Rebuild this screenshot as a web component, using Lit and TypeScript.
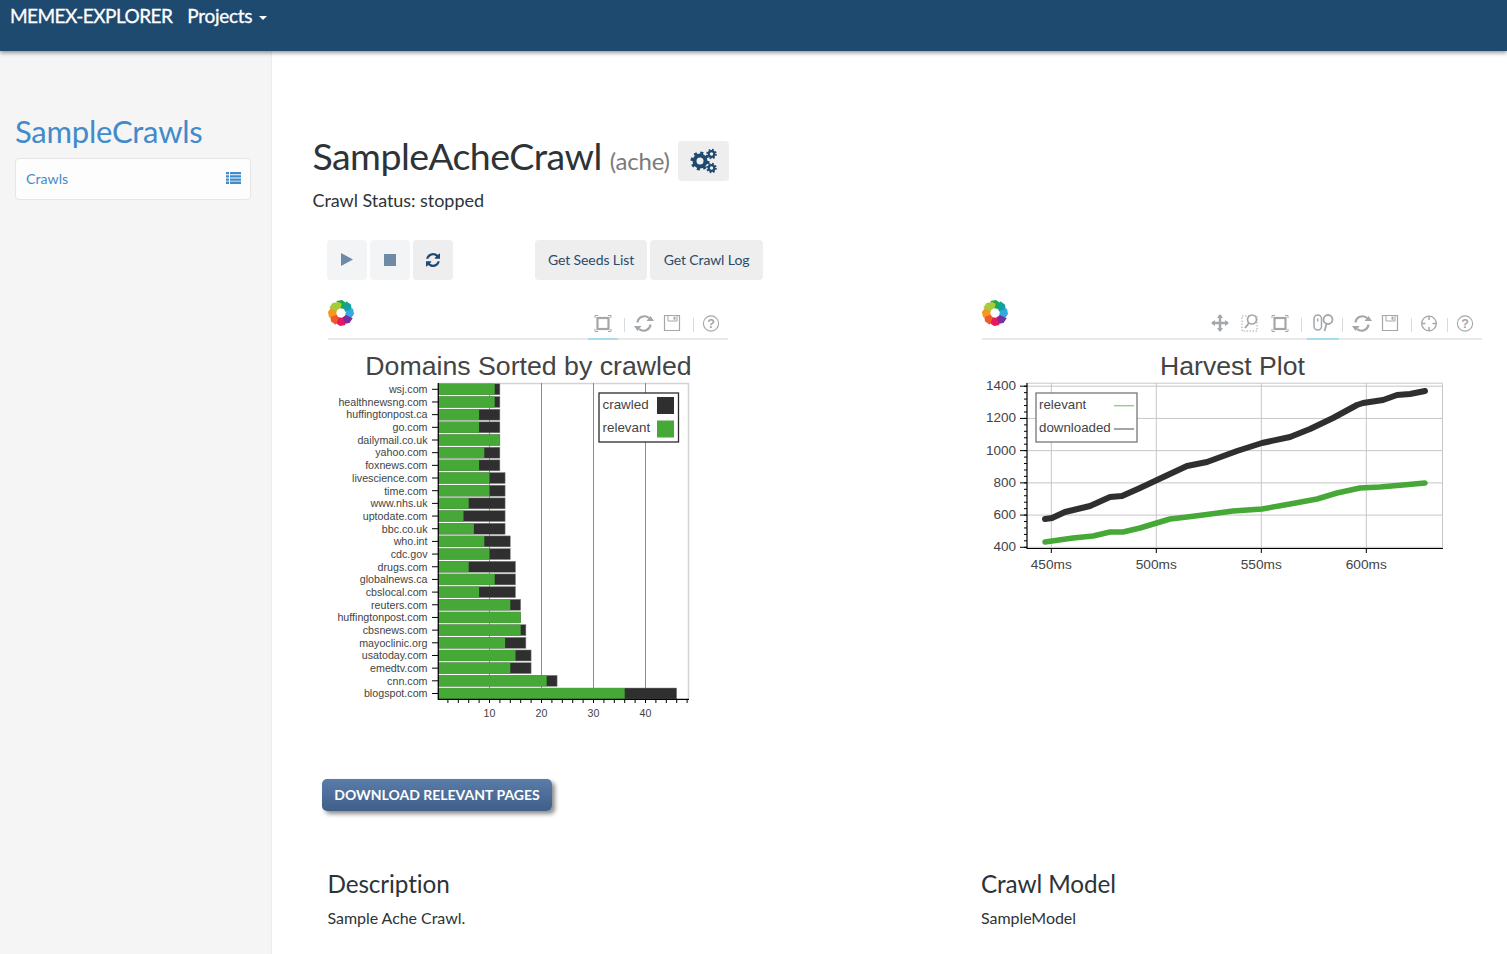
import { LitElement, css, html, svg } from "lit";
import { customElement, property } from "lit/decorators.js";

const DOMAINS: [string, number, number][] = [
  ["wsj.com", 11, 12], ["healthnewsng.com", 11, 12], ["huffingtonpost.ca", 8, 12], ["go.com", 8, 12],
  ["dailymail.co.uk", 12, 12], ["yahoo.com", 9, 12], ["foxnews.com", 8, 12], ["livescience.com", 10, 13],
  ["time.com", 10, 13], ["www.nhs.uk", 6, 13], ["uptodate.com", 5, 13], ["bbc.co.uk", 7, 13],
  ["who.int", 9, 14], ["cdc.gov", 10, 14], ["drugs.com", 6, 15], ["globalnews.ca", 11, 15],
  ["cbslocal.com", 8, 15], ["reuters.com", 14, 16], ["huffingtonpost.com", 16, 16], ["cbsnews.com", 16, 17],
  ["mayoclinic.org", 13, 17], ["usatoday.com", 15, 18], ["emedtv.com", 14, 18], ["cnn.com", 21, 23],
  ["blogspot.com", 36, 46],
];

const DOWNLOADED = "1045,519 1052,518 1065,512 1090,506 1110,497 1122,496 1140,488 1157,480 1187,466 1207,462 1237,451 1262,443 1290,437 1310,429 1333,418 1357,405 1363,403 1383,400 1397,395 1410,394 1425,391";
const RELEVANT = "1045,542 1073,538 1093,536 1110,532 1123,532 1140,528 1170,519 1187,517 1203,515 1233,511 1262,509 1290,504 1317,499 1337,493 1360,488 1380,487 1403,485 1425,483";

const PETALS = ["#1fa84f", "#0fa3a0", "#35a8e0", "#7b2d9b", "#e9175f", "#f0592a", "#f7981d", "#a5cd39"];

const logo = html`<svg class="logo" width="26" height="26" viewBox="-13 -13 26 26">
  ${PETALS.map((c, i) => svg`<polygon transform="rotate(${i * 45})" fill=${c} points="-4.500,-12 1,-13 6,-9.500 7,-6 3.500,-4 -2,-5"></polygon>`)}
</svg>`;

const icons: Record<string, unknown> = {
  pan: svg`<path d="M10 2v16M2 10h16" stroke-width="2.4"/><path d="M7 5l3-4 3 4zM7 15l3 4 3-4zM5 7l-4 3 4 3zM15 7l4 3-4 3z" fill="#a3a7aa" stroke="none"/>`,
  zoomsel: svg`<rect x="2" y="3" width="15" height="15" stroke-dasharray="1.5 1.5" stroke-width="1"/><circle cx="12" cy="6.500" r="4.500" fill="#fff" stroke-width="1.700"/><path d="M9 10l-4 5" stroke-width="2"/>`,
  box: svg`<rect x="4.500" y="5" width="11" height="11" stroke-width="2.200"/><path d="M2 5V2.500H5M15 2.500h3V5M18 16v2.500h-3M5 18.500H2V16" stroke-width="1"/>`,
  wheel: svg`<rect x="2" y="2" width="7.500" height="15" rx="3.700" stroke-width="1.500"/><path d="M5.700 5.500v3" stroke-width="1.500"/><circle cx="16" cy="6.500" r="4.500" stroke-width="1.800"/><path d="M14.500 11l-2 7" stroke-width="1.800"/>`,
  reset: svg`<path d="M3.500 9.500a7 7 0 0 1 11.500-4.500M16.500 11.500a7 7 0 0 1-11.500 4.500" stroke-width="2.200"/><path d="M12.500 8h7.500l-3.500-5zM7.500 13H0l3.500 5z" fill="#a3a7aa" stroke="none"/>`,
  save: svg`<path d="M2.500 2.500h15v15h-15z" stroke-width="1.200"/><path d="M6 2.500v5.500h9V2.500" stroke-width="1"/><rect x="11.500" y="3.700" width="2" height="3" fill="#a3a7aa" stroke="none"/>`,
  cross: svg`<circle cx="10" cy="10.500" r="7.300" stroke-width="1.300"/><path d="M10 3v4M10 14v4M2.500 10.500h4M13.500 10.500h4" stroke-width="1.500"/>`,
  help: svg`<circle cx="10" cy="10.500" r="7.600" stroke-width="1.100"/><text x="10" y="15" text-anchor="middle" font-size="12.500" font-weight="700" fill="#a3a7aa" stroke="none" font-family="Liberation Sans, sans-serif">?</text>`,
};

@customElement("plot-toolbar")
export class PlotToolbar extends LitElement {
  // "|" is a separator, a leading * marks the tool as active
  @property({ type: Array }) tools: string[] = [];

  static styles = css`
    :host { display: block; }
    .bar {
      display: flex;
      align-items: flex-start;
      justify-content: space-between;
      height: 38px;
      border-bottom: 2px solid #e9e9e9;
      box-sizing: content-box;
    }
    .tools {
      display: flex;
      align-items: center;
      height: 21px;
      margin-top: 13px;
      padding-right: 5.5px;
    }
    .tool {
      position: relative;
      width: 20px;
      height: 21px;
      margin: 0 5px;
    }
    .tool svg { display: block; fill: none; stroke: #a3a7aa; }
    .tool.reset { margin: 0 4px 0 3px; }
    .tool.save { margin: 0 5px 0 4px; }
    .tool.cross, .tool.help { margin: 0 1.5px; }
    .tool.wheel { width: 22px; margin: 0 1.5px 0 4px; }
    .tool.active::after {
      content: "";
      position: absolute;
      left: -5px;
      right: -5px;
      top: 25px;
      height: 2px;
      background: #a9dcef;
    }
    .sep { width: 1px; height: 14px; margin: 2px 6px 0; background: #d5dbe0; }
    .logo { display: block; }
  `;

  render() {
    return html`<div class="bar">
      ${logo}
      <div class="tools">
        ${this.tools.map((t) => {
          if (t === "|") return html`<span class="sep"></span>`;
          const active = t.startsWith("*");
          const name = active ? t.slice(1) : t;
          return html`<span class="tool ${name} ${active ? "active" : ""}">
            <svg width=${name === "wheel" ? 22 : 20} height="21" viewBox="0 0 ${name === "wheel" ? 22 : 20} 21">${icons[name]}</svg>
          </span>`;
        })}
      </div>
    </div>`;
  }
}

@customElement("domains-plot")
export class DomainsPlot extends LitElement {
  static styles = css`
    :host { display: block; }
    svg { display: block; font-family: "Liberation Sans", Arial, sans-serif; }
  `;

  render() {
    const sx = (v: number) => 437.5 + 5.2 * v;
    const ry = (i: number) => 389.3 + (304.2 / 24) * i;
    const minor = Array.from({ length: 24 }, (_, i) => (i + 1) * 2);
    return html`<svg width="400" height="400" viewBox="328 340 400 400">
      <text x="528.500" y="375" text-anchor="middle" font-size="26.700" fill="#444">Domains Sorted by crawled</text>
      <path d="M438 383.500H688.500V699" fill="none" stroke="#d4d4d4" stroke-width="1.500"/>
      ${[10, 20, 30, 40].map((v) => svg`<line x1=${sx(v)} x2=${sx(v)} y1="383" y2="699" stroke="#868c94" stroke-width="1"/>`)}
      ${DOMAINS.map(([name, rel, crawled], i) => svg`
        <rect x="438" y=${ry(i) - 5.5} width=${sx(crawled) - 438} height="11" fill="#2f2f2f" stroke="#8a8a8a" stroke-width=".5"/>
        <rect x="438" y=${ry(i) - 5.5} width=${sx(rel) - 438} height="11" fill="#46a836"/>
        <line x1="432" x2="438" y1=${ry(i)} y2=${ry(i)} stroke="#000" stroke-width="1"/>
        <text x="427.500" y=${ry(i) + 3.800} text-anchor="end" font-size="10.700" fill="#444">${name}</text>
      `)}
      <path d="M438.300 383V699.300H689" fill="none" stroke="#000" stroke-width="1.200"/>
      ${minor.map((v) => svg`<line x1=${sx(v)} x2=${sx(v)} y1="699" y2="703" stroke="#000" stroke-width="1"/>`)}
      ${[10, 20, 30, 40].map((v) => svg`<text x=${sx(v)} y="717" text-anchor="middle" font-size="10.600" fill="#444">${v}</text>`)}
      <rect x="599" y="393" width="79.500" height="49" fill="#fff" stroke="#2b2b2b" stroke-width="1.300"/>
      <text x="602.500" y="409" font-size="13.400" fill="#444">crawled</text>
      <text x="602.500" y="432" font-size="13.400" fill="#444">relevant</text>
      <rect x="657" y="397" width="17" height="17" fill="#2f2f2f"/>
      <rect x="657" y="420.500" width="17" height="17" fill="#46a836"/>
    </svg>`;
  }
}

@customElement("harvest-plot")
export class HarvestPlot extends LitElement {
  static styles = css`
    :host { display: block; }
    svg { display: block; font-family: "Liberation Sans", Arial, sans-serif; }
  `;

  render() {
    const sx = (ms: number) => 1051.3 + 2.1 * (ms - 450);
    const sy = (v: number) => 547.3 - 0.1611 * (v - 400);
    const xs = [450, 500, 550, 600];
    const ys = [400, 600, 800, 1000, 1200, 1400];
    const minor = Array.from({ length: 26 }, (_, i) => 400 + i * 40);
    return html`<svg width="500" height="240" viewBox="982 340 500 240">
      <text x="1232.500" y="375" text-anchor="middle" font-size="26.600" fill="#444">Harvest Plot</text>
      <path d="M1027 383.200H1442.500V548" fill="none" stroke="#c8c8c8" stroke-width="1"/>
      ${xs.map((v) => svg`<line x1=${sx(v)} x2=${sx(v)} y1="383" y2="548" stroke="#c6c6c6"/>`)}
      ${ys.map((v) => svg`<line x1="1027" x2="1442" y1=${sy(v)} y2=${sy(v)} stroke="#c6c6c6"/>`)}
      <polyline points=${RELEVANT} fill="none" stroke="#46a836" stroke-width="5.500" stroke-linecap="round" stroke-linejoin="round"/>
      <polyline points=${DOWNLOADED} fill="none" stroke="#2f2f2f" stroke-width="6" stroke-linecap="round" stroke-linejoin="round"/>
      <path d="M1027 383V548.500H1443" fill="none" stroke="#000" stroke-width="1.200"/>
      ${minor.map((v) => svg`<line x1="1024" x2="1027" y1=${sy(v)} y2=${sy(v)} stroke="#000"/>`)}
      ${ys.map((v) => svg`
        <line x1="1020" x2="1027" y1=${sy(v)} y2=${sy(v)} stroke="#000"/>
        <text x="1016" y=${sy(v) + 4} text-anchor="end" font-size="13.500" fill="#444">${v}</text>
      `)}
      ${xs.map((v) => svg`
        <line x1=${sx(v)} x2=${sx(v)} y1="548" y2="553" stroke="#000"/>
        <text x=${sx(v)} y="569" text-anchor="middle" font-size="13.700" fill="#444">${v}ms</text>
      `)}
      <rect x="1036" y="393" width="101" height="49" fill="#fff" stroke="#777" stroke-width="1.300"/>
      <text x="1039" y="408.500" font-size="13.300" fill="#444">relevant</text>
      <text x="1039" y="431.500" font-size="13.300" fill="#444">downloaded</text>
      <line x1="1114" x2="1134" y1="405.700" y2="405.700" stroke="#98cd8e" stroke-width="1.500"/>
      <line x1="1114" x2="1134" y1="429" y2="429" stroke="#888" stroke-width="1.500"/>
    </svg>`;
  }
}

@customElement("app-root")
export class AppRoot extends LitElement {
  static styles = css`
    :host {
      display: block;
      height: 954px;
      overflow: hidden;
      background: #fff;
      color: #2e3338;
      font-family: Lato, "Open Sans", sans-serif;
    }
    .navbar {
      position: relative;
      z-index: 2;
      display: flex;
      align-items: flex-start;
      gap: 15px;
      height: 51px;
      padding: 4px 10px 0;
      box-sizing: border-box;
      background: #1f4a70;
      color: #fff;
      font-size: 19px;
      line-height: 23px;
      letter-spacing: -0.55px;
      -webkit-text-stroke: 0.3px #fff;
      box-shadow: 0 2px 4px rgba(0, 0, 0, 0.4);
    }
    .projects { letter-spacing: -0.3px; }
    .caret {
      display: inline-block;
      margin-left: 2px;
      vertical-align: 3px;
      border-top: 4px solid #fff;
      border-left: 4px solid transparent;
      border-right: 4px solid transparent;
    }
    .shell { display: flex; height: 903px; }
    .sidebar {
      width: 272px;
      flex: none;
      box-sizing: border-box;
      padding: 61px 20px 0 15px;
      background: #f5f5f5;
      border-right: 1px solid #ececec;
    }
    .sidebar h2 {
      margin: 0;
      font-size: 31px;
      font-weight: 400;
      line-height: 38px;
      letter-spacing: -0.25px;
      color: #428bca;
    }
    .panel {
      display: flex;
      align-items: center;
      justify-content: space-between;
      height: 42px;
      margin-top: 8px;
      padding: 0 9px 2px 10px;
      box-sizing: border-box;
      background: #fdfdfd;
      border: 1px solid #e6e6e6;
      border-radius: 4px;
      color: #428bca;
      font-size: 14.200px;
    }
    .main { flex: 1; padding: 88px 0 0 40.500px; min-width: 0; }
    .title { display: flex; align-items: center; gap: 8px; height: 44px; }
    .title h1 { margin: -5px 0 0; font-size: 37.500px; font-weight: 400; line-height: 44px; letter-spacing: -0.55px; }
    .title small { margin-left: 8px; font-size: 24px; color: #7b7b7b; letter-spacing: -0.2px; }
    .btn {
      display: inline-flex;
      align-items: center;
      justify-content: center;
      box-sizing: border-box;
      height: 40px;
      padding-bottom: 1px;
      background: #eeeeee;
      border-radius: 4px;
      color: #2c4a68;
      font-size: 14px;
      letter-spacing: -0.1px;
    }
    .gear { width: 51px; color: #1f4a70; }
    .status { margin: 4px 0 0; font-size: 18px; line-height: 26px; letter-spacing: -0.05px; }
    .actions { display: flex; gap: 3px; margin: 27px 0 0 14.500px; height: 40px; }
    .actions .icon { width: 40px; }
    .actions .off { background: #f3f4f5; color: #6e8aa6; }
    .actions .seeds { margin-left: 79px; width: 112px; }
    .actions .log { width: 113px; }
    .columns { display: grid; grid-template-columns: 654px 500px; margin: 20px 0 0 15.500px; }
    .plot { width: 400px; }
    .plot.wide { width: 500px; }
    .download {
      display: block;
      width: 230px;
      height: 32px;
      margin: 39px 0 0 9.500px;
      border-radius: 5px;
      background: linear-gradient(#5a7ca9, #3f5f89);
      box-shadow: 3px 3px 4px rgba(0, 0, 0, 0.45);
      color: #fff;
      font-size: 14px;
      font-weight: 700;
      line-height: 32px;
      letter-spacing: 0;
      text-align: center;
    }
    .info { display: grid; grid-template-columns: 653.500px 500px; margin: 57px 0 0 15px; }
    .info h3 { margin: 0; font-size: 24.300px; font-weight: 400; line-height: 32px; letter-spacing: -0.1px; }
    .info p { margin: 8px 0 0; font-size: 16px; line-height: 20px; letter-spacing: -0.05px; }
  `;

  render() {
    return html`
      <div class="navbar">
        <span>MEMEX-EXPLORER</span>
        <span class="projects">Projects <span class="caret"></span></span>
      </div>
      <div class="shell">
        <aside class="sidebar">
          <h2>SampleCrawls</h2>
          <div class="panel">
            <span>Crawls</span>
            <svg width="15" height="12" viewBox="0 0 15 12" fill="#428bca">
              <path d="M0 0h3v2.300H0zM4 0h11v2.300H4zM0 3.200h3v2.300H0zM4 3.200h11v2.300H4zM0 6.400h3v2.300H0zM4 6.400h11v2.300H4zM0 9.600h3V12H0zM4 9.600h11V12H4z"/>
            </svg>
          </div>
        </aside>
        <main class="main">
          <div class="title">
            <h1>SampleAcheCrawl<small>(ache)</small></h1>
            <span class="btn gear">
              <svg width="27" height="26" viewBox="0 0 27 26" fill="none" stroke="currentColor">
                <circle cx="10" cy="13" r="5.500" stroke-width="4"/>
                <circle cx="10" cy="13" r="8" stroke-width="3" stroke-dasharray="3 3.280"/>
                <circle cx="21.500" cy="6" r="2.800" stroke-width="2.200"/>
                <circle cx="21.500" cy="6" r="4.400" stroke-width="1.800" stroke-dasharray="1.700 1.760"/>
                <circle cx="21.500" cy="20" r="2.800" stroke-width="2.200"/>
                <circle cx="21.500" cy="20" r="4.400" stroke-width="1.800" stroke-dasharray="1.700 1.760"/>
              </svg>
            </span>
          </div>
          <p class="status">Crawl Status: stopped</p>
          <div class="actions">
            <span class="btn icon off">
              <svg width="12" height="13" viewBox="0 0 12 13" fill="currentColor"><path d="M0 0l12 6.500L0 13z"/></svg>
            </span>
            <span class="btn icon off">
              <svg width="12" height="12" viewBox="0 0 12 12" fill="currentColor"><path d="M0 0h12v12H0z"/></svg>
            </span>
            <span class="btn icon">
              <svg width="14" height="14" viewBox="128 128 1536 1536" fill="#1f4a70">
                <path d="M1639 1056q0 5-1 7-64 268-268 434.500t-478 166.500q-146 0-282.500-55t-243.500-157l-129 129q-19 19-45 19t-45-19-19-45v-448q0-26 19-45t45-19h448q26 0 45 19t19 45-19 45l-137 137q71 66 161 102t187 36q134 0 250-65t186-179q11-17 53-117 8-23 30-23h192q13 0 22.500 9.500t9.500 22.500zm25-800v448q0 26-19 45t-45 19h-448q-26 0-45-19t-19-45 19-45l138-138q-148-137-349-137-134 0-250 65t-186 179q-11 17-53 117-8 23-30 23h-199q-13 0-22.500-9.500t-9.500-22.500v-7q65-268 270-434.500t480-166.500q146 0 284 55.500t245 156.500l130-129q19-19 45-19t45 19 19 45z"/>
              </svg>
            </span>
            <span class="btn seeds">Get Seeds List</span>
            <span class="btn log">Get Crawl Log</span>
          </div>
          <div class="columns">
            <div class="plot">
              <plot-toolbar .tools=${["*box", "|", "reset", "save", "|", "help"]}></plot-toolbar>
              <domains-plot></domains-plot>
            </div>
            <div class="plot wide">
              <plot-toolbar .tools=${["pan", "zoomsel", "box", "|", "*wheel", "|", "reset", "save", "|", "cross", "|", "help"]}></plot-toolbar>
              <harvest-plot></harvest-plot>
            </div>
          </div>
          <span class="download">DOWNLOAD RELEVANT PAGES</span>
          <div class="info">
            <div><h3>Description</h3><p>Sample Ache Crawl.</p></div>
            <div><h3>Crawl Model</h3><p>SampleModel</p></div>
          </div>
        </main>
      </div>
    `;
  }
}
